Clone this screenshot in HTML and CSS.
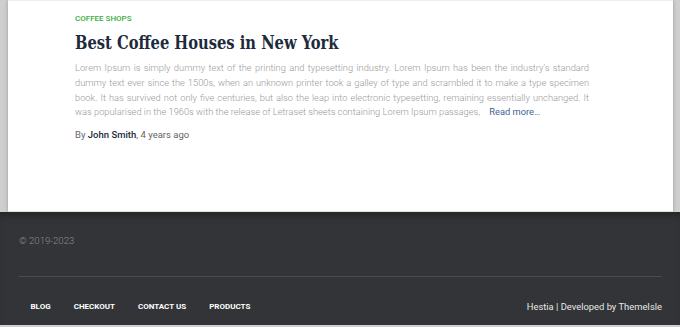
FILE: index.html
```html
<!DOCTYPE html>
<html>
<head lang="en">
    <meta charset="UTF-8">
    <title>Coffee Shops</title>
    <link rel="stylesheet" href="styles.css">
</head>
<body>
<div class="page">
    <div class="main">
        <div class="post">
            <h6 class="category">Coffee Shops</h6>
            <h2 class="title">Best Coffee Houses in New York</h2>
            <p class="excerpt">Lorem Ipsum is simply dummy text of the printing and typesetting industry. Lorem Ipsum has been the industry's standard dummy text ever since the 1500s, when an unknown printer took a galley of type and scrambled it to make a type specimen book. It has survived not only five centuries, but also the leap into electronic typesetting, remaining essentially unchanged. It was popularised in the 1960s with the release of Letraset sheets containing Lorem Ipsum passages, <a class="more" href="javascript:void(0)">Read more…</a></p>
            <div class="author">By <b>John Smith</b>, 4 years ago</div>
        </div>
    </div>
    <div class="footer">
        <div class="copy">© 2019-2023</div>
        <hr>
        <div class="bottom">
            <ul class="menu">
                <li><a href="javascript:void(0)">Blog</a></li>
                <li><a href="javascript:void(0)">Checkout</a></li>
                <li><a href="javascript:void(0)">Contact Us</a></li>
                <li><a href="javascript:void(0)">Products</a></li>
            </ul>
            <div class="credits">Hestia | Developed by ThemeIsle</div>
        </div>
    </div>
</div>
</body>
</html>
```
FILE: styles.css
```css
*{
    margin: 0;
    padding: 0;
    box-sizing: border-box;
}
li{
    list-style: none;
}
a{
    text-decoration: none;
}
body{
    background: #cfcfcf;
    font-family: Roboto, "Noto Sans", sans-serif;
    height: 327px;
    overflow: hidden;
}
.page{
    display: flex;
    flex-direction: column;
    height: 325px;
}
.main{
    height: 212px;
    margin: 0 7px 0 8px;
    background: #fff;
    border-top: 1px solid #eee;
    border-bottom: 1px solid #e2e2e2;
    box-shadow: 0 0 4px rgba(0,0,0,.25);
    padding: 12px 0 0 67px;
}
.post{
    width: 514px;
}
.category{
    color: #38ad3c;
    font-size: 8px;
    font-weight: 500;
    text-transform: uppercase;
    line-height: 12px;
}
.title{
    color: #1d2a3b;
    font-family: "DejaVu Serif Condensed", "DejaVu Serif", serif;
    font-size: 19px;
    font-weight: bold;
    line-height: 24px;
    margin: 5px 0 7px;
    white-space: nowrap;
    transform: scaleX(.86);
    transform-origin: left center;
}
.excerpt{
    color: #999;
    font-size: 9.3px;
    font-weight: 300;
    line-height: 14.8px;
    text-align: justify;
}
.more{
    display: inline-block;
    color: #3a6494;
    font-weight: 400;
    margin-left: 7px;
}
.author{
    color: #666;
    font-size: 9.5px;
    margin-top: 8px;
    line-height: 14px;
}
.author b{
    color: #1d2a3b;
    font-weight: 500;
}
.footer{
    flex: 1;
    background: #323437;
    box-shadow: inset 0 8px 10px -6px rgba(0,0,0,.35);
    padding: 22px 18px 0 19px;
}
.copy{
    color: #8a8b8d;
    font-size: 9.6px;
    font-weight: 300;
    line-height: 14px;
}
.footer hr{
    border: 0;
    border-top: 1px solid #4a4b4e;
    margin: 28px 0 0;
}
.bottom{
    display: flex;
    justify-content: space-between;
    align-items: center;
    padding-top: 23px;
}
.menu{
    display: flex;
}
.menu a{
    display: block;
    color: #fff;
    font-size: 8px;
    font-weight: 700;
    text-transform: uppercase;
    padding: 0 11.5px;
    line-height: 14px;
}
.credits{
    color: #e8e8e8;
    font-size: 9.4px;
    line-height: 14px;
}
```
